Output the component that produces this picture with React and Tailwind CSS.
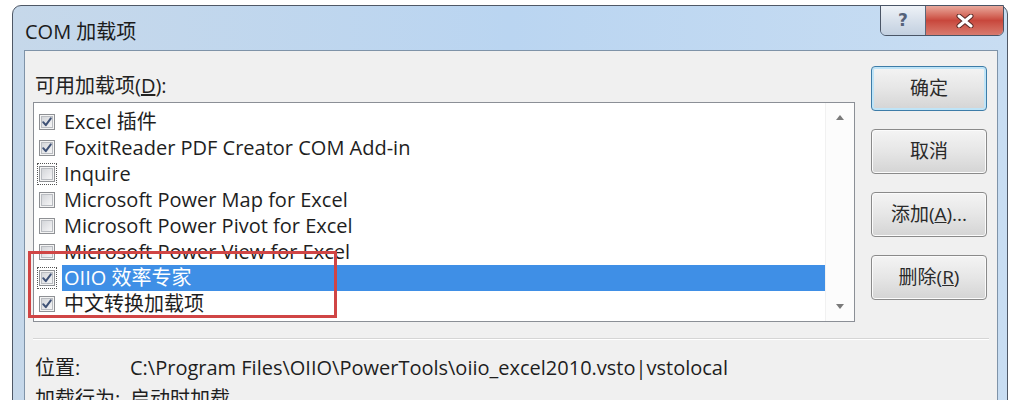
import React from "react";

const FONT = { fontFamily: '"Open Sans", "Noto Sans CJK SC", "Noto Sans", sans-serif' };

function Check({ checked, focus }) {
  return (
    <div className={`w-[20px] h-[22px] flex items-center justify-center ${focus ? "border border-dotted border-[#555]" : "border border-transparent"}`}>
      <svg width="16" height="16" viewBox="0 0 16 16">
        <defs>
          <linearGradient id="cbg" x1="0" y1="0" x2="1" y2="1">
            <stop offset="0" stopColor="#d2d4d8" />
            <stop offset="1" stopColor="#f7f7f8" />
          </linearGradient>
        </defs>
        <rect x="0.5" y="0.5" width="15" height="15" fill="#f4f4f4" stroke="#8e9094" />
        <rect x="2.5" y="2.5" width="11" height="11" fill="url(#cbg)" stroke="#b9bcc1" />
        {checked && (
          <path d="M4.2 8.2 L6.8 11.2 L11.8 4.4" fill="none" stroke="#3f5276" strokeWidth="2" strokeLinecap="round" strokeLinejoin="round" />
        )}
      </svg>
    </div>
  );
}

const items = [
  { t: "Excel 插件", c: true },
  { t: "FoxitReader PDF Creator COM Add-in", c: true },
  { t: "Inquire", c: false, f: true },
  { t: "Microsoft Power Map for Excel", c: false },
  { t: "Microsoft Power Pivot for Excel", c: false },
  { t: "Microsoft Power View for Excel", c: false },
  { t: "OIIO 效率专家", c: true, sel: true, f: true },
  { t: "中文转换加载项", c: true },
];

function Btn({ children, def }) {
  return (
    <div
      className={`h-[45px] w-[116px] rounded-[4px] border flex items-center justify-center text-[19px] text-[#2a2a2a] bg-gradient-to-b from-[#f4f4f4] via-[#e6e6e6] to-[#d4d4d4] ${
        def ? "border-[#3d7ca8] shadow-[inset_0_0_0_2px_#bfe4f7]" : "border-[#8a8a8a] shadow-[inset_0_0_0_1px_#fbfbfb]"
      }`}
    >
      {children}
    </div>
  );
}

export default function App() {
  return (
    <div className="relative w-[1010px] h-[400px] overflow-hidden bg-white" style={FONT}>
      {/* window */}
      <div className="ml-[12px] mt-[5px] w-[996px] h-[420px] border border-[#4f5866] rounded-tl-[9px] rounded-tr-[9px] bg-gradient-to-r from-[#c6d8ea] via-[#bad5f1] to-[#c8ddf2] flex flex-col">
        {/* title bar */}
        <div className="h-[44px] flex items-start">
          <div className="pl-[12px] pt-[13px] text-[20px] leading-[26px] text-[#1b1b1b]">COM 加载项</div>
          <div className="ml-auto mr-[3px] -mt-[1px] flex h-[31px] border border-[#4a5566] rounded-b-[6px] overflow-hidden">
            <div className="w-[45px] h-full flex items-center justify-center bg-gradient-to-b from-[#eef2f7] via-[#d7e0eb] to-[#c3d0e0] border-r border-[#5a6678]">
              <span className="text-[17px] font-bold text-[#55627a] leading-none" style={{ fontFamily: '"DejaVu Sans", sans-serif' }}>?</span>
            </div>
            <div className="w-[77px] h-full flex items-center justify-center bg-gradient-to-b from-[#e8a89c] via-[#c8473c] to-[#d87a6e]">
              <svg width="18" height="14" viewBox="0 0 18 14">
                <path d="M3 2 L15 12 M15 2 L3 12" stroke="#5a2a26" strokeWidth="5" strokeLinecap="round" />
                <path d="M3 2 L15 12 M15 2 L3 12" stroke="#ffffff" strokeWidth="3" strokeLinecap="round" />
              </svg>
            </div>
          </div>
        </div>
        {/* client */}
        <div className="flex-1 ml-[11px] mr-[9px] border border-[#7f93a8] bg-[#f0f0f0] flex flex-col px-[8px]">
          <div className="flex items-start pt-[15px]">
            <div className="flex flex-col w-[822px] pt-[8px]">
              <div className="pl-[2px] text-[20px] leading-[24px] text-[#222]">
                可用加载项(<span className="underline">D</span>):
              </div>
              <div className="mt-[4px] h-[220px] border border-[#8b8f96] bg-white flex">
                <div className="flex-1 flex flex-col pt-[6px] pl-[3px]">
                  {items.map((it, i) => (
                    <div key={i} className="h-[26px] flex items-center">
                      <Check checked={it.c} focus={it.f} />
                      <div
                        className={`ml-[5px] flex-1 h-[26px] flex items-center px-[2px] text-[20px] whitespace-nowrap ${
                          it.sel ? "bg-[#3f8fe6] text-white" : "text-[#1e1e1e]"
                        }`}
                      >
                        {it.t}
                      </div>
                    </div>
                  ))}
                </div>
                <div className="w-[29px] flex flex-col items-center justify-between py-[12px] border-l border-[#f1f1f1] bg-[#fcfcfc]">
                  <div className="w-0 h-0 border-l-[4px] border-r-[4px] border-b-[5px] border-l-transparent border-r-transparent border-b-[#7a7a7a]" />
                  <div className="w-0 h-0 border-l-[4px] border-r-[4px] border-t-[5px] border-l-transparent border-r-transparent border-t-[#7a7a7a]" />
                </div>
              </div>
            </div>
            <div className="ml-[16px] flex flex-col gap-[18px]">
              <Btn def>确定</Btn>
              <Btn>取消</Btn>
              <Btn>添加(<span className="underline">A</span>)...</Btn>
              <Btn>删除(<span className="underline">R</span>)</Btn>
            </div>
          </div>
          <div className="mt-[16px] border-t border-[#d5d5d5] border-b border-b-white" />
          <div className="mt-[15px] flex flex-col gap-[5px] text-[20px] leading-[26px] text-[#1e1e1e]">
            <div className="flex">
              <div className="w-[97px] pl-[2px]">位置:</div>
              <div>C:\Program Files\OIIO\PowerTools\oiio_excel2010.vsto|vstolocal</div>
            </div>
            <div className="flex">
              <div className="w-[97px] pl-[2px]">加载行为:</div>
              <div>启动时加载</div>
            </div>
          </div>
        </div>
      </div>
      {/* red annotation */}
      <div className="absolute left-[28px] top-[251px] w-[309px] h-[67px] border-[3px] border-[#d04545]" />
    </div>
  );
}
